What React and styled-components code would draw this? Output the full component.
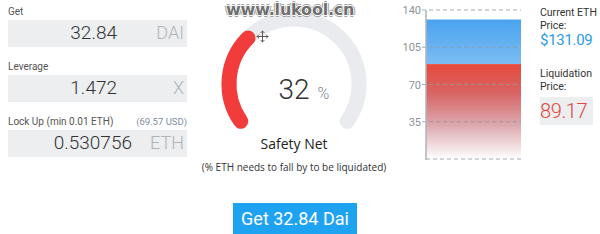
import React from "react";
import styled, { createGlobalStyle } from "styled-components";
import { Move } from "lucide-react";

const GlobalStyle = createGlobalStyle`
  html, body {
    margin: 0;
    padding: 0;
    background: #fff;
  }
  body {
    font-family: Roboto, "Noto Sans", sans-serif;
    color: #333;
  }
`;

const Page = styled.div`
  position: relative;
  width: 600px;
  height: 234px;
  overflow: hidden;
`;

const TopRow = styled.div`
  display: flex;
  height: 195px;
`;

const LeftCol = styled.div`
  width: 179px;
  margin-left: 8px;
  padding-top: 5px;
  display: flex;
  flex-direction: column;
  gap: 13px;
`;

const Field = styled.div`
  display: flex;
  flex-direction: column;
`;

const LabelRow = styled.div`
  display: flex;
  justify-content: space-between;
  align-items: baseline;
  height: 15px;
  line-height: 13px;
`;

const Label = styled.span`
  font-size: 10px;
  color: #555;
`;

const Hint = styled.span`
  font-size: 9.5px;
  color: #7e8da0;
`;

const InputBox = styled.div`
  display: flex;
  align-items: center;
  height: 27px;
  padding-bottom: 2px;
  box-sizing: border-box;
  background: #eceef0;
`;

const Value = styled.span`
  flex: 1;
  text-align: right;
  font-size: 19px;
  font-weight: 300;
  color: #333;
`;

const Unit = styled.span`
  width: ${(p) => p.$width}px;
  padding-right: 3px;
  box-sizing: border-box;
  text-align: right;
  font-size: 18px;
  font-weight: 300;
  color: #b0b4ba;
`;

const GaugeCol = styled.div`
  width: 188px;
  margin-left: 13px;
  padding-top: 10px;
  display: flex;
  flex-direction: column;
  align-items: center;
  font-family: "Open Sans", "Noto Sans", sans-serif;
`;

const GaugeWrap = styled.div`
  position: relative;
  width: 150px;
  height: 124px;
`;

const Percent = styled.div`
  position: absolute;
  top: 66px;
  left: 50%;
  transform: translateX(-50%);
  font-family: Roboto, sans-serif;
  font-size: 28px;
  font-weight: 300;
  line-height: 28px;
  color: #333;
`;

const PercentSign = styled.span`
  position: absolute;
  top: 4px;
  left: 100%;
  margin-left: 8px;
  font-size: 16px;
  line-height: 28px;
  color: #7a8896;
`;

const Cursor = styled.div`
  position: absolute;
  left: 37px;
  top: 20px;
  display: flex;
  color: #444;
`;

const GaugeTitle = styled.div`
  margin-top: 1px;
  font-size: 14px;
  line-height: 18px;
  color: #222;
`;

const GaugeNote = styled.div`
  margin-top: 7px;
  font-size: 10px;
  line-height: 14px;
  color: #333;
  white-space: nowrap;
`;

const ChartCol = styled.div`
  margin-left: 10px;
  width: 130px;
`;

const InfoCol = styled.div`
  margin-left: 12px;
  padding-top: 6px;
  display: flex;
  flex-direction: column;
`;

const InfoLabel = styled.div`
  font-size: 10.5px;
  line-height: 13px;
  color: #333;
  margin-top: ${(p) => p.$gap || 0}px;
`;

const CurrentPrice = styled.div`
  font-size: 15px;
  line-height: 16px;
  color: #2c9be6;
  letter-spacing: -0.3px;
`;

const LiquidationBox = styled.div`
  margin-top: 4px;
  width: 53px;
  height: 28px;
  background: #eceef0;
  font-size: 20px;
  font-weight: 300;
  line-height: 28px;
  color: #e5453a;
  letter-spacing: -0.4px;
`;

const BottomRow = styled.div`
  display: flex;
  justify-content: center;
  padding-right: 10px;
  margin-top: 8px;
`;

const GetButton = styled.button`
  border: none;
  background: #1ea3f3;
  color: #fff;
  font-family: Roboto, sans-serif;
  font-size: 18px;
  line-height: 26px;
  padding: 3px 8px 8px;
  cursor: pointer;
`;

const Watermark = styled.div`
  position: absolute;
  top: 0;
  left: 226px;
  font-family: "DejaVu Sans", sans-serif;
  font-weight: bold;
  font-size: 16px;
  line-height: 20px;
  color: #6f6f6f;
  letter-spacing: -0.2px;
  text-shadow: 1px 0 #fff, -1px 0 #fff, 0 1px #fff, 0 -1px #fff,
    2px 0 #a0a0a0, -2px 0 #a0a0a0, 0 2px #a0a0a0, 0 -2px #a0a0a0;
`;

const fields = [
  { label: "Get", value: "32.84", unit: "DAI", unitWidth: 70 },
  { label: "Leverage", value: "1.472", unit: "X", unitWidth: 70 },
  {
    label: "Lock Up (min 0.01 ETH)",
    hint: "(69.57 USD)",
    value: "0.530756",
    unit: "ETH",
    unitWidth: 55,
  },
];

function polar(cx, cy, r, deg) {
  const a = (deg * Math.PI) / 180;
  return [cx + r * Math.cos(a), cy - r * Math.sin(a)];
}

function arcPath(cx, cy, r, from, to) {
  const [x1, y1] = polar(cx, cy, r, from);
  const [x2, y2] = polar(cx, cy, r, to);
  const large = from - to > 180 ? 1 : 0;
  return `M ${x1} ${y1} A ${r} ${r} 0 ${large} 1 ${x2} ${y2}`;
}

function Gauge({ percent }) {
  const start = 215;
  const sweep = 250;
  const end = start - sweep * (percent / 100);
  return (
    <GaugeWrap>
      <svg width="150" height="124" viewBox="0 0 150 124">
        <path
          d={arcPath(75, 74, 65, start, start - sweep)}
          fill="none"
          stroke="#e9ebee"
          strokeWidth="15"
          strokeLinecap="round"
        />
        <path
          d={arcPath(75, 74, 65, start, end)}
          fill="none"
          stroke="#f23b3b"
          strokeWidth="15"
          strokeLinecap="round"
        />
      </svg>
      <Percent>
        {percent}
        <PercentSign>%</PercentSign>
      </Percent>
      <Cursor>
        <Move size={13} strokeWidth={1.6} />
      </Cursor>
    </GaugeWrap>
  );
}

function PriceChart({ current, liquidation }) {
  const top = 10;
  const bottom = 159;
  const max = 140;
  const y = (v) => bottom - (v / max) * (bottom - top);
  const ticks = [140, 105, 70, 35];
  return (
    <svg width="130" height="165" viewBox="0 0 130 165">
      <defs>
        <linearGradient id="blueFill" x1="0" y1="0" x2="0" y2="1">
          <stop offset="0" stopColor="#4aa3ef" />
          <stop offset="1" stopColor="#7cbdf3" />
        </linearGradient>
        <linearGradient id="redFill" x1="0" y1="0" x2="0" y2="1">
          <stop offset="0" stopColor="#e74a3c" />
          <stop offset="0.3" stopColor="#d86464" />
          <stop offset="0.65" stopColor="#dcaab0" />
          <stop offset="1" stopColor="#ffffff" />
        </linearGradient>
      </defs>
      <rect x="28" y={y(current)} width="95" height={y(liquidation) - y(current)} fill="url(#blueFill)" />
      <rect x="28" y={y(liquidation)} width="95" height={bottom - y(liquidation)} fill="url(#redFill)" />
      {ticks.map((t) => (
        <g key={t}>
          <line
            x1="24"
            x2="123"
            y1={y(t)}
            y2={y(t)}
            stroke="#8f98a3"
            strokeOpacity="0.8"
            strokeDasharray="4 3"
          />
          <text
            x="23"
            y={y(t) + 4}
            textAnchor="end"
            fontFamily="Roboto, sans-serif"
            fontSize="11"
            fill="#8b939c"
          >
            {t}
          </text>
        </g>
      ))}
      <line x1="28" x2="123" y1={bottom} y2={bottom} stroke="#a4abb3" strokeDasharray="4 3" />
      <line x1="28" x2="28" y1={top} y2={bottom + 1} stroke="#aeb3b9" strokeWidth="1.5" />
    </svg>
  );
}

export default function App() {
  return (
    <Page>
      <GlobalStyle />
      <TopRow>
        <LeftCol>
          {fields.map((f) => (
            <Field key={f.label}>
              <LabelRow>
                <Label>{f.label}</Label>
                {f.hint && <Hint>{f.hint}</Hint>}
              </LabelRow>
              <InputBox>
                <Value>{f.value}</Value>
                <Unit $width={f.unitWidth}>{f.unit}</Unit>
              </InputBox>
            </Field>
          ))}
        </LeftCol>
        <GaugeCol>
          <Gauge percent={32} />
          <GaugeTitle>Safety Net</GaugeTitle>
          <GaugeNote>(% ETH needs to fall by to be liquidated)</GaugeNote>
        </GaugeCol>
        <ChartCol>
          <PriceChart current={131.09} liquidation={89.17} />
        </ChartCol>
        <InfoCol>
          <InfoLabel>Current ETH</InfoLabel>
          <InfoLabel>Price:</InfoLabel>
          <CurrentPrice>$131.09</CurrentPrice>
          <InfoLabel $gap={19}>Liquidation</InfoLabel>
          <InfoLabel>Price:</InfoLabel>
          <LiquidationBox>89.17</LiquidationBox>
        </InfoCol>
      </TopRow>
      <BottomRow>
        <GetButton>Get 32.84 Dai</GetButton>
      </BottomRow>
      <Watermark>www.lukool.cn</Watermark>
    </Page>
  );
}
